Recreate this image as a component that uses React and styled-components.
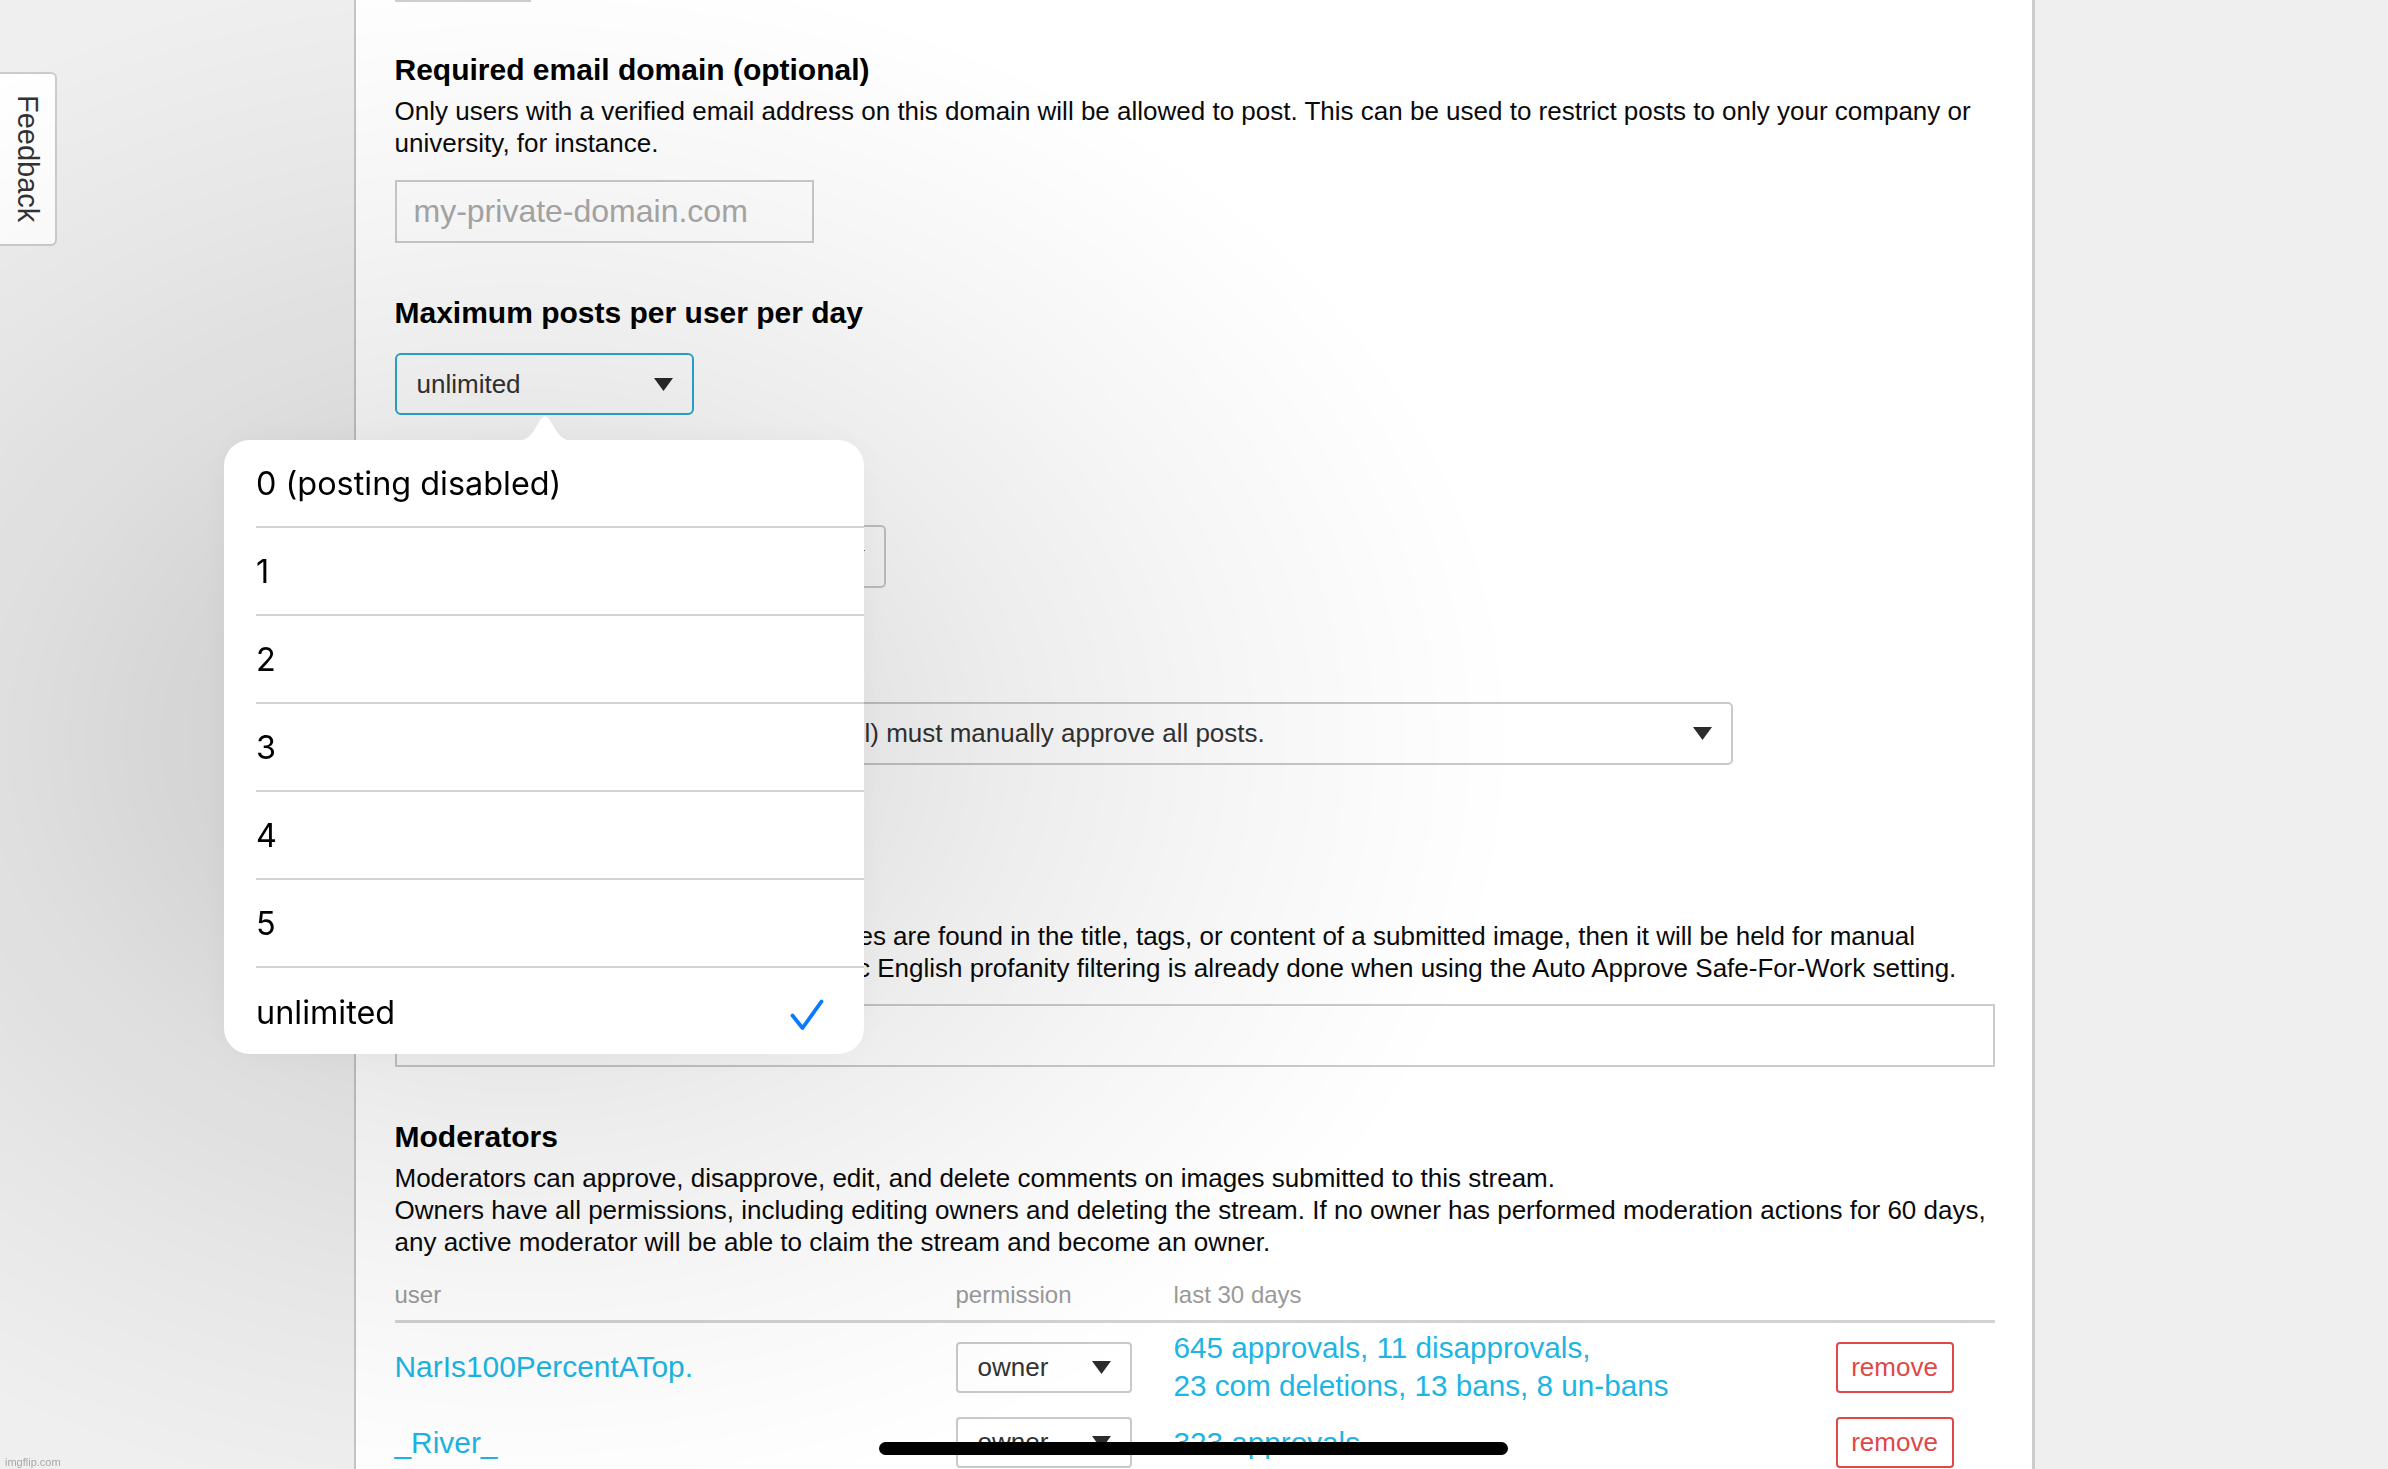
import React from 'react';
import styled, { createGlobalStyle } from 'styled-components';

const Global = createGlobalStyle`
  html, body { margin: 0; padding: 0; overflow: hidden; background: #efefef; }
  body { font-family: "Liberation Sans", Arial, Helvetica, sans-serif; color: #000; }
  *, *::before, *::after { box-sizing: border-box; }
`;

const Page = styled.div`
  position: relative;
  width: 2388px;
  height: 1469px;
  overflow: hidden;
  background: #efefef;
`;

const Panel = styled.main`
  width: 1681px;
  min-height: 1469px;
  margin: 0 auto;
  background: #fff;
  border-left: 2px solid #c6c6c6;
  border-right: 3px solid #cdcdcd;
  padding: 0 37px 0 39px;
`;

const TopStub = styled.div`
  width: 136px;
  height: 2px;
  background: #cfcfcf;
`;

const Section = styled.section`
  margin-top: ${(p) => p.$gap}px;
`;

const Heading = styled.h2`
  margin: 0;
  font-size: 30px;
  line-height: 36px;
  font-weight: bold;
  color: #000;
`;

const Desc = styled.div`
  margin-top: 7px;
  font-size: 26px;
  line-height: 32px;
  color: #0a0a0a;
`;

const Line = styled.span`
  display: block;
  white-space: nowrap;
`;

const TextField = styled.div`
  margin-top: ${(p) => p.$gap}px;
  width: ${(p) => p.$w};
  height: 63px;
  border: 2px solid #cbcbcb;
  background: #fff;
  display: flex;
  align-items: center;
  padding-left: 17px;
  font-size: 32px;
  color: #a9a9a9;
`;

const Select = styled.div`
  margin-top: 22px;
  width: ${(p) => p.$w}px;
  height: ${(p) => p.$h || 62}px;
  border: 2px solid ${(p) => (p.$focus ? '#2aa9d4' : '#c9c9c9')};
  border-radius: ${(p) => (p.$focus ? 6 : 5)}px;
  background: #fff;
  display: flex;
  align-items: center;
  justify-content: space-between;
  padding: 0 19px 0 20px;
  font-size: 26px;
  color: #333;
  white-space: nowrap;
  overflow: hidden;
`;

const SmallSelect = styled(Select)`
  margin-top: 0;
  border-radius: 4px;
`;

const Caret = () => (
  <svg width="19" height="13" viewBox="0 0 19 13" style={{ flex: 'none' }}>
    <path d="M0 0 H19 L9.5 13 Z" fill="#2b2b2b" />
  </svg>
);

const Table = styled.div`
  margin-top: 22px;
`;

const Grid = styled.div`
  display: grid;
  grid-template-columns: 561px 218px 1fr 159px;
  align-items: center;
`;

const HeadRow = styled(Grid)`
  padding-bottom: 10px;
  border-bottom: 3px solid #d2d2d2;
  font-size: 24px;
  line-height: 30px;
  color: #9a9a9a;
`;

const Row = styled(Grid)`
  padding: 6px 0;
`;

const UserLink = styled.span`
  font-size: 29.9px;
  line-height: 38px;
  color: #1db5e3;
`;

const Stats = styled.div`
  font-size: 29.7px;
  line-height: 38px;
  color: #1db5e3;
`;

const RemoveBtn = styled.div`
  width: 118px;
  height: 51px;
  border: 2px solid #e04848;
  border-radius: 4px;
  color: #e04848;
  font-size: 26px;
  display: flex;
  align-items: center;
  justify-content: center;
`;

const Glow = styled.div`
  position: absolute;
  inset: 0;
  pointer-events: none;
  z-index: 9;
  background: radial-gradient(
    ellipse 1000px 780px at 520px 740px,
    rgba(0, 0, 0, 0.14) 0%,
    rgba(0, 0, 0, 0.1) 35%,
    rgba(0, 0, 0, 0.072) 50%,
    rgba(0, 0, 0, 0.035) 72%,
    rgba(0, 0, 0, 0.01) 90%,
    rgba(0, 0, 0, 0) 100%
  );
`;

const Popover = styled.div`
  position: absolute;
  left: 224px;
  top: 440px;
  width: 640px;
  height: 614px;
  background: #fff;
  border-radius: 26px;
  box-shadow: 0 0 40px rgba(0, 0, 0, 0.04);
  z-index: 10;
`;

const PopArrow = styled.svg`
  position: absolute;
  left: 292px;
  top: -25px;
`;

const OptionList = styled.ul`
  list-style: none;
  margin: 0;
  padding: 0 0 0 32px;
`;

const Option = styled.li`
  height: 88px;
  display: flex;
  align-items: center;
  justify-content: space-between;
  padding-right: 40px;
  font-family: Inter, "Noto Sans", sans-serif;
  font-size: 32.4px;
  color: #000;
  border-bottom: ${(p) => (p.$last ? 'none' : '2px solid #d3d3d7')};
`;

const CheckMark = styled.svg`
  margin-top: 6px;
`;

const Check = () => (
  <CheckMark width="34" height="32" viewBox="0 0 34 32">
    <path d="M2.5 16.5 L12.5 29 L31.5 2.5" fill="none" stroke="#0a7aff" strokeWidth="3.8" strokeLinecap="round" strokeLinejoin="round" />
  </CheckMark>
);

const FeedbackTab = styled.div`
  position: fixed;
  left: 0;
  top: 72px;
  width: 57px;
  height: 174px;
  background: #fff;
  border: 2px solid #cccccc;
  border-left: none;
  border-radius: 0 6px 6px 0;
  display: flex;
  align-items: center;
  justify-content: center;
  writing-mode: vertical-rl;
  font-size: 29px;
  color: #333;
`;

const HomeBar = styled.div`
  position: fixed;
  left: 879px;
  top: 1442px;
  width: 629px;
  height: 13px;
  border-radius: 7px;
  background: #000;
  z-index: 20;
`;

const Watermark = styled.div`
  position: fixed;
  left: 5px;
  bottom: 0px;
  font-size: 11px;
  line-height: 14px;
  color: #a8a8a8;
  z-index: 20;
`;

const options = ['0 (posting disabled)', '1', '2', '3', '4', '5', 'unlimited'];

export default function App() {
  return (
    <Page>
      <Global />
      <Panel>
        <TopStub />
        <Section $gap={50}>
          <Heading>Required email domain (optional)</Heading>
          <Desc>
            Only users with a verified email address on this domain will be allowed to post. This can be used to restrict posts to only your company or university, for instance.
          </Desc>
          <TextField $gap={21} $w="419px">my-private-domain.com</TextField>
        </Section>

        <Section $gap={52}>
          <Heading>Maximum posts per user per day</Heading>
          <Select $w={299} $focus>
            <span>unlimited</span>
            <Caret />
          </Select>
        </Section>

        <Section $gap={52}>
          <Heading>Who can post</Heading>
          <Select $w={491} $h={63}>
            <span>anyone</span>
            <Caret />
          </Select>
        </Section>

        <Section $gap={56}>
          <Heading>Approval mode</Heading>
          <Select $w={1338} $h={63}>
            <span>Moderators (and all owners, if any at all) must manually approve all posts.</span>
            <Caret />
          </Select>
        </Section>

        <Section $gap={112}>
          <Heading>Banned words (optional)</Heading>
          <Desc>
            <Line>If any of these prohibited words or phrases are found in the title, tags, or content of a submitted image, then it will be held for manual</Line>
            <Line>approval by a moderator. Note that, basic English profanity filtering is already done when using the Auto Approve Safe-For-Work setting.</Line>
          </Desc>
          <TextField $gap={20} $w="100%" />
        </Section>

        <Section $gap={52}>
          <Heading>Moderators</Heading>
          <Desc>
            <Line>Moderators can approve, disapprove, edit, and delete comments on images submitted to this stream.</Line>
            <Line>Owners have all permissions, including editing owners and deleting the stream. If no owner has performed moderation actions for 60 days,</Line>
            <Line>any active moderator will be able to claim the stream and become an owner.</Line>
          </Desc>
          <Table>
            <HeadRow>
              <span>user</span>
              <span>permission</span>
              <span>last 30 days</span>
              <span />
            </HeadRow>
            <Row>
              <UserLink>NarIs100PercentATop.</UserLink>
              <SmallSelect $w={176} $h={51}>
                <span>owner</span>
                <Caret />
              </SmallSelect>
              <Stats>
                <Line>645 approvals, 11 disapprovals,</Line>
                <Line>23 com deletions, 13 bans, 8 un-bans</Line>
              </Stats>
              <RemoveBtn>remove</RemoveBtn>
            </Row>
            <Row>
              <UserLink>_River_</UserLink>
              <SmallSelect $w={176} $h={51}>
                <span>owner</span>
                <Caret />
              </SmallSelect>
              <Stats>
                <Line>323 approvals</Line>
              </Stats>
              <RemoveBtn>remove</RemoveBtn>
            </Row>
          </Table>
        </Section>
      </Panel>

      <Glow />
      <Popover>
        <PopArrow width="58" height="26" viewBox="0 0 58 26">
          <path d="M0 26 Q11 26 17 17 L25 4 Q29 -1.5 33 4 L41 17 Q47 26 58 26 Z" fill="#fff" />
        </PopArrow>
        <OptionList>
          {options.map((o, i) => (
            <Option key={o} $last={i === options.length - 1}>
              <span>{o}</span>
              {o === 'unlimited' && <Check />}
            </Option>
          ))}
        </OptionList>
      </Popover>

      <FeedbackTab>Feedback</FeedbackTab>
      <HomeBar />
      <Watermark>imgflip.com</Watermark>
    </Page>
  );
}
